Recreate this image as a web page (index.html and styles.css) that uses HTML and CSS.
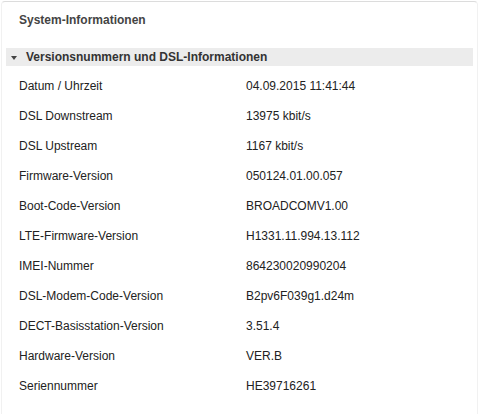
FILE: index.html
```html
<!DOCTYPE html>
<html lang="de">
<head>
<meta charset="utf-8">
<title>System-Informationen</title>
<link rel="stylesheet" href="styles.css">
</head>
<body>
<div class="panel">
  <div class="title">System-Informationen</div>
  <div class="section">
    <div class="section-head">
      <span class="arrow"></span>
      <span class="section-title">Versionsnummern und DSL-Informationen</span>
    </div>
    <div class="rows">
      <div class="row"><span class="label">Datum / Uhrzeit</span><span class="value">04.09.2015 11:41:44</span></div>
      <div class="row"><span class="label">DSL Downstream</span><span class="value">13975 kbit/s</span></div>
      <div class="row"><span class="label">DSL Upstream</span><span class="value">1167 kbit/s</span></div>
      <div class="row"><span class="label">Firmware-Version</span><span class="value">050124.01.00.057</span></div>
      <div class="row"><span class="label">Boot-Code-Version</span><span class="value">BROADCOMV1.00</span></div>
      <div class="row"><span class="label">LTE-Firmware-Version</span><span class="value">H1331.11.994.13.112</span></div>
      <div class="row"><span class="label">IMEI-Nummer</span><span class="value">864230020990204</span></div>
      <div class="row"><span class="label">DSL-Modem-Code-Version</span><span class="value">B2pv6F039g1.d24m</span></div>
      <div class="row"><span class="label">DECT-Basisstation-Version</span><span class="value">3.51.4</span></div>
      <div class="row"><span class="label">Hardware-Version</span><span class="value">VER.B</span></div>
      <div class="row"><span class="label">Seriennummer</span><span class="value">HE39716261</span></div>
    </div>
  </div>
</div>
</body>
</html>
```

FILE: styles.css
```css
html, body {
  margin: 0;
  padding: 0;
  background: #fff;
}
body {
  font-family: "Liberation Sans", Arial, sans-serif;
  font-size: 12px;
  color: #222;
}
.panel {
  margin: 1px 2px 0 1px;
  border: 1px solid #f1f1f1;
  border-top-color: #dcdcdc;
  border-bottom: none;
  border-radius: 4px 4px 0 0;
  height: 420px;
  box-sizing: border-box;
}
.title {
  margin-top: 10px;
  padding-left: 17px;
  line-height: 16px;
  font-weight: bold;
  color: #444;
}
.section {
  margin-top: 20px;
}
.section-head {
  margin: 0 4px;
  height: 18px;
  background: #ececec;
  display: flex;
  align-items: center;
}
.arrow {
  width: 0;
  height: 0;
  margin-left: 5px;
  margin-top: 2px;
  border-left: 3.5px solid transparent;
  border-right: 3.5px solid transparent;
  border-top: 4px solid #444;
}
.section-title {
  margin-left: 9px;
  font-weight: bold;
  color: #333;
  font-size: 12px;
}
.rows {
  margin-top: 5px;
}
.row {
  display: grid;
  grid-template-columns: 244px 1fr;
  height: 30px;
  align-items: center;
}
.label {
  padding-left: 17px;
}
```
